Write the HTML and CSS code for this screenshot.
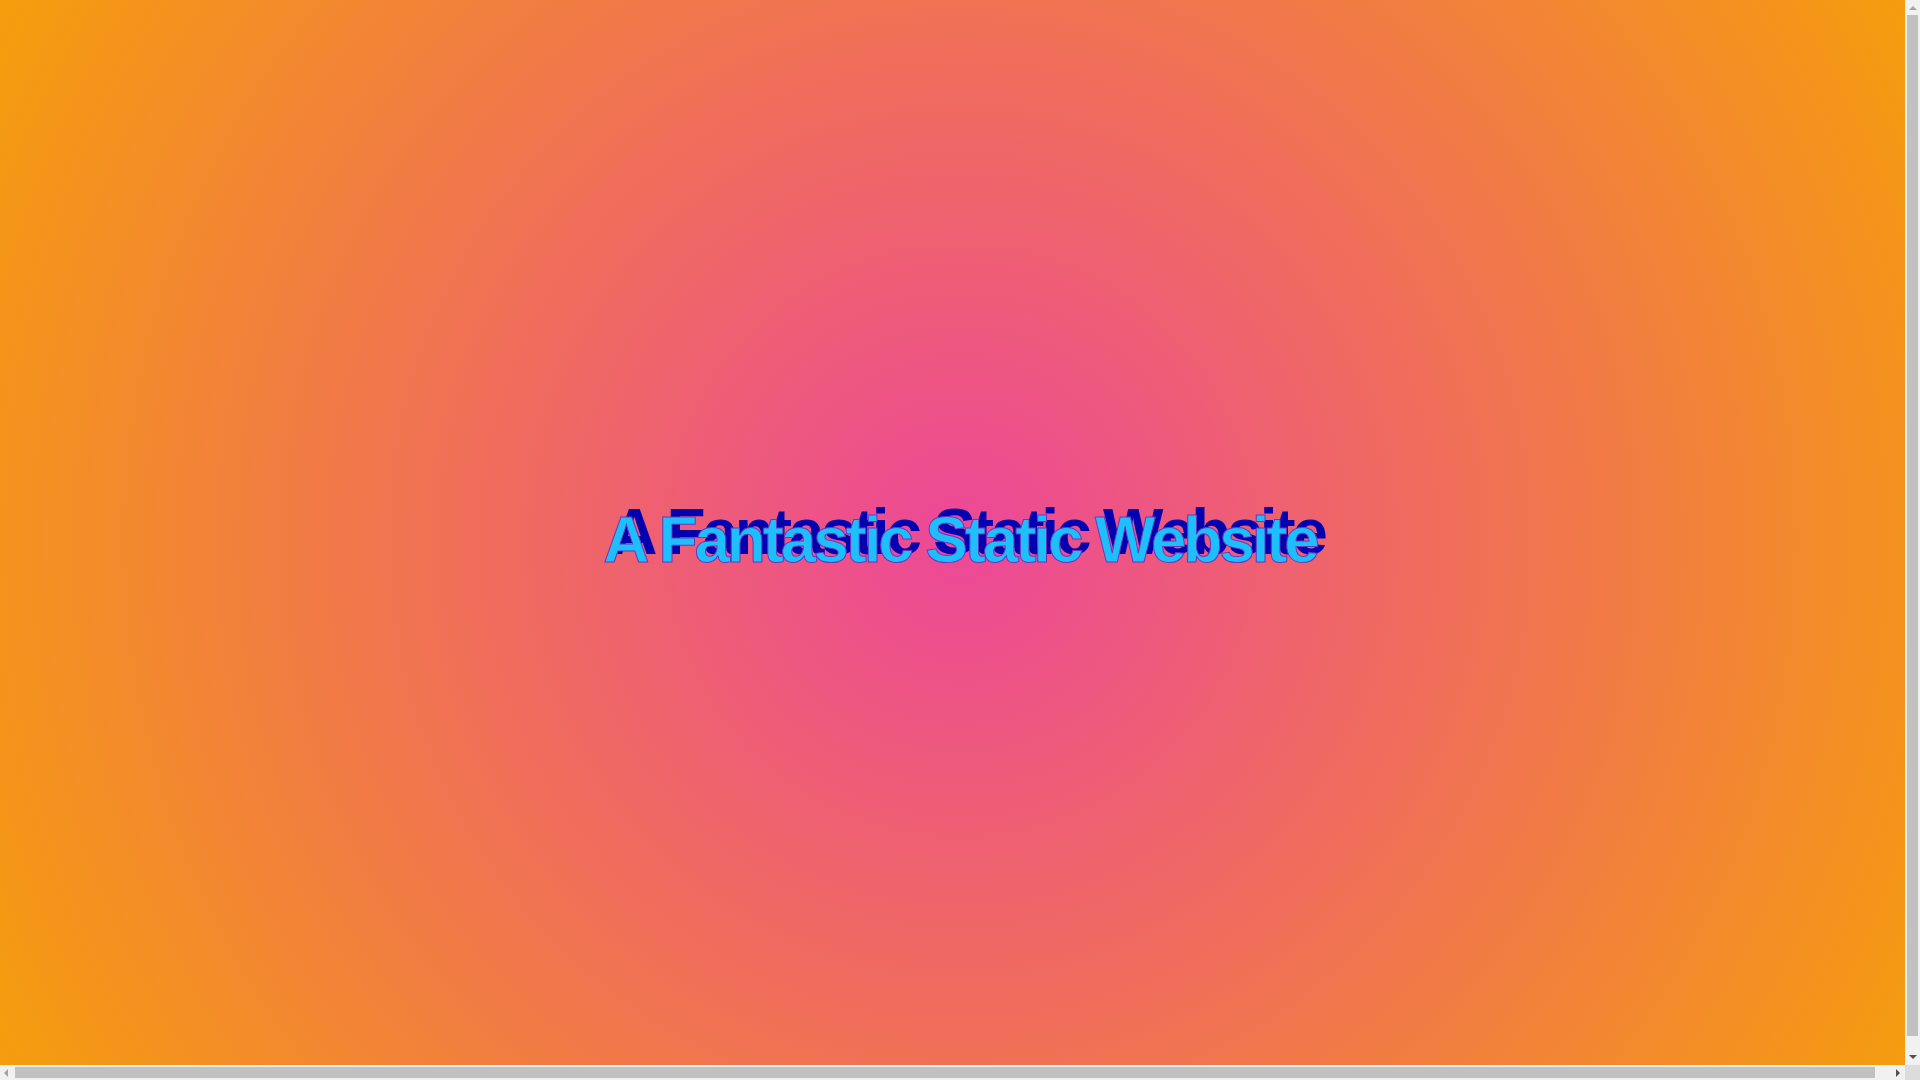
FILE: index.html
```html
<!DOCTYPE html>
<html lang="en">
<head>
<meta charset="utf-8">
<title>A Fantastic Static Website</title>
<link rel="stylesheet" href="styles.css">
</head>
<body>
<main class="hero">
  <h1 class="title">A Fantastic Static Website</h1>
</main>
<div class="sb sb-v" aria-hidden="true">
  <span class="arrow arrow-up"></span>
  <span class="thumb thumb-v"></span>
  <span class="arrow arrow-down"></span>
</div>
<div class="sb sb-h" aria-hidden="true">
  <span class="arrow arrow-left"></span>
  <span class="thumb thumb-h"></span>
  <span class="arrow arrow-right"></span>
</div>
<div class="sb-corner" aria-hidden="true"></div>
</body>
</html>
```
FILE: styles.css
```css
html, body {
  margin: 0;
  padding: 0;
}
body {
  background: radial-gradient(circle at 50% 50%, #ec4899 0%, #f59e0b 100%);
  font-family: "Liberation Sans", Arial, sans-serif;
  overflow: hidden;
}
.hero {
  width: 100vw;
  height: 100vh;
  display: flex;
  align-items: center;
  justify-content: center;
  background: radial-gradient(circle at 50% 50%, #ec4899 0%, #f59e0b 100%);
}
.title {
  margin: 0;
  font-size: 64px;
  font-weight: bold;
  letter-spacing: -3.2px;
  color: #1ebfff;
  -webkit-text-stroke: 1px #6a35c0;
  text-shadow: 8px -8px 0 #0400b0;
}

/* simulated classic scrollbars */
.sb {
  position: fixed;
  background: #f1f1f1;
  display: flex;
  align-items: center;
  box-sizing: border-box;
}
.sb-v {
  top: 0;
  right: 0;
  width: 15px;
  height: 1065px;
  flex-direction: column;
  padding: 0 2px;
}
.sb-h {
  left: 0;
  bottom: 0;
  width: 1905px;
  height: 15px;
  flex-direction: row;
  padding: 2px 0;
}
.sb-corner {
  position: fixed;
  right: 0;
  bottom: 0;
  width: 15px;
  height: 15px;
  background: #dcdcdc;
}
.thumb {
  background: #c1c1c1;
  display: block;
}
.thumb-v {
  width: 11px;
  height: 1021px;
  margin-top: 5px;
}
.thumb-h {
  height: 11px;
  width: 1860px;
  margin-left: 7px;
}
.arrow {
  width: 0;
  height: 0;
  display: block;
  flex: none;
}
.arrow-up {
  margin-top: 6px;
  border-left: 4px solid transparent;
  border-right: 4px solid transparent;
  border-bottom: 4px solid #a3a3a3;
}
.arrow-down {
  margin-top: 19px;
  border-left: 4px solid transparent;
  border-right: 4px solid transparent;
  border-top: 4px solid #505050;
}
.arrow-left {
  margin-left: 4px;
  border-top: 4px solid transparent;
  border-bottom: 4px solid transparent;
  border-right: 4px solid #a3a3a3;
}
.arrow-right {
  margin-left: 21px;
  border-top: 4px solid transparent;
  border-bottom: 4px solid transparent;
  border-left: 4px solid #505050;
}
```
